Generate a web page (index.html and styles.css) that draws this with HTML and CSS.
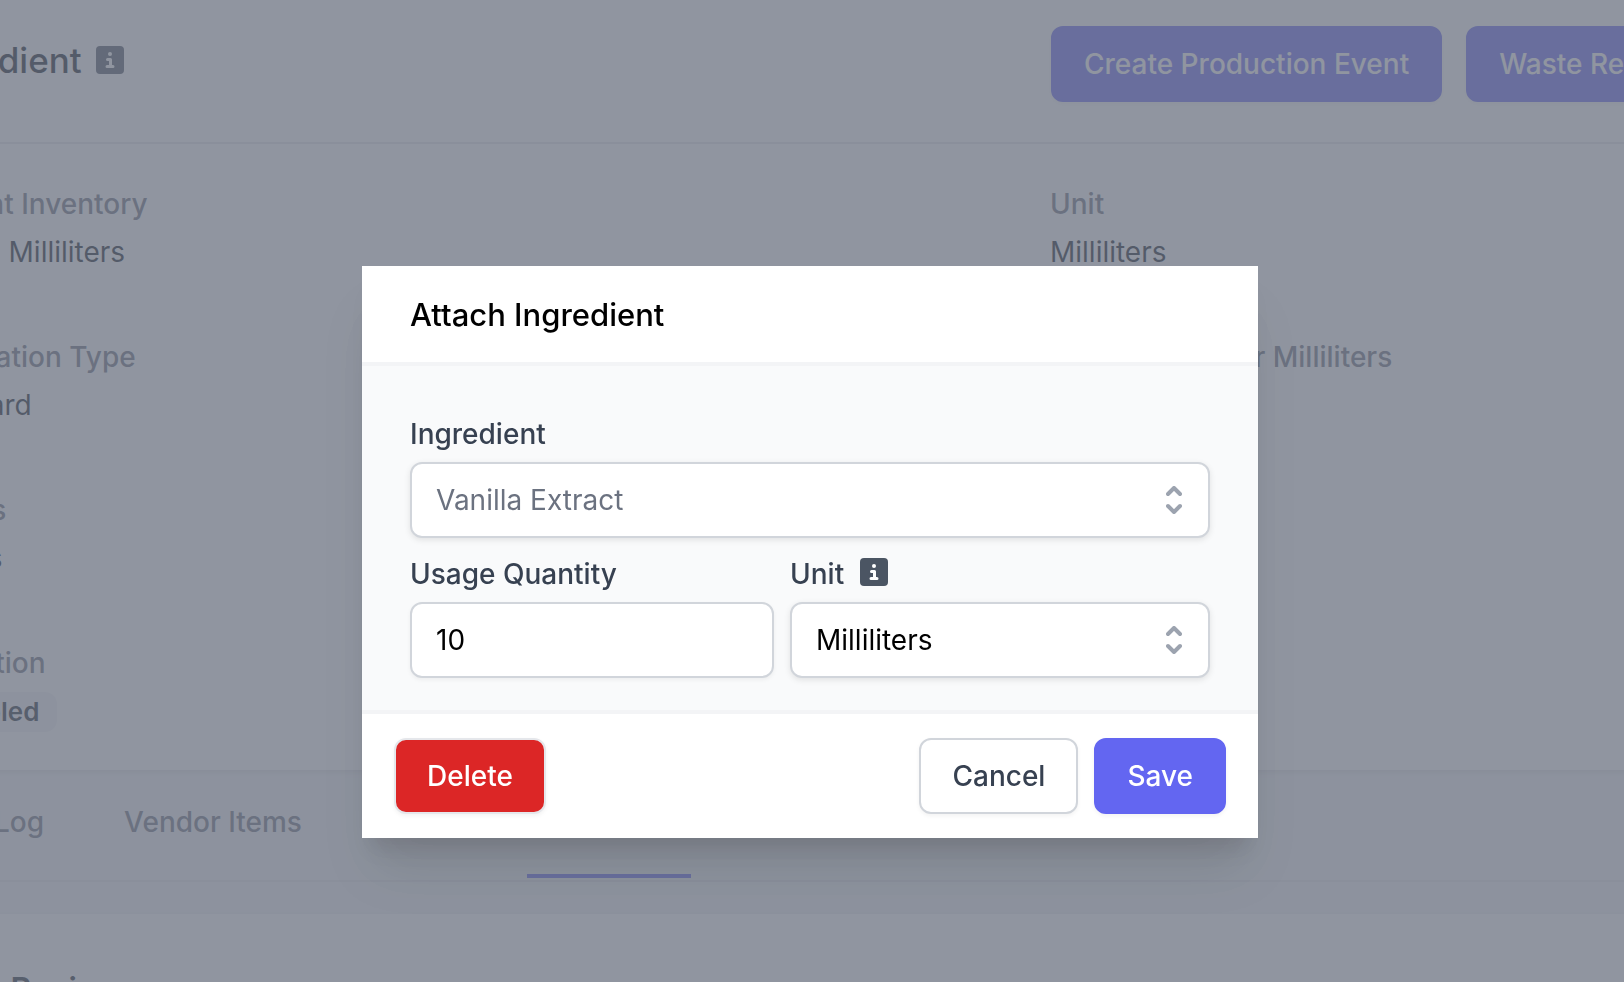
FILE: index.html
```html
<!DOCTYPE html>
<html lang="en">
<head>
  <meta charset="UTF-8" />
  <meta name="viewport" content="width=device-width, initial-scale=1.0" />
  <title>Ingredient</title>
  <link rel="stylesheet" href="styles.css">
</head>
<body>
  <div class="page" inert>
    <section class="card">
      <header class="card-header">
        <h1>Ingredient
          <svg class="info" viewBox="0 0 28 28" aria-hidden="true">
            <rect width="28" height="28" rx="4" fill="currentColor"/>
            <circle cx="14" cy="8" r="2"/>
            <path d="M11.500 13.500h3v7M11 20.500h6"/>
          </svg>
        </h1>
        <div class="actions">
          <button class="btn btn-primary">Create Production Event</button>
          <button class="btn btn-primary">Waste Report</button>
        </div>
      </header>
      <dl class="details">
        <div><dt>Current Inventory</dt><dd>10,000 Milliliters</dd></div>
        <div><dt>Unit</dt><dd>Milliliters</dd></div>
        <div><dt>Calculation Type</dt><dd>Standard</dd></div>
        <div><dt>Market Cost per Milliliters</dt><dd>0.02</dd></div>
        <div><dt>Brands</dt><dd>Bottles</dd></div>
        <div></div>
        <div><dt>Allocation</dt><dd><span class="badge">Disabled</span></dd></div>
      </dl>
    </section>

    <nav class="tabs">
      <a href="#">Log</a>
      <a href="#">Vendor Items</a>
      <a href="#">Sales</a>
      <a href="#" class="active">Allocations</a>
    </nav>

    <section class="card recipe">
      <h2>In Recipes</h2>
    </section>
  </div>

  <div class="overlay">
    <form class="modal" role="dialog" aria-labelledby="modalTitle">
      <h2 class="modal-title" id="modalTitle">Attach Ingredient</h2>

      <div class="modal-body">
        <div class="field">
          <label for="ingredient">Ingredient</label>
          <div class="select">
            <select id="ingredient" class="muted">
              <option>Vanilla Extract</option>
            </select>
            <svg class="chevrons" viewBox="0 0 16 28" aria-hidden="true">
              <path d="M2 8l6-6 6 6M2 20l6 6 6-6"/>
            </svg>
          </div>
        </div>

        <div class="row">
          <div class="field">
            <label for="quantity">Usage Quantity</label>
            <input type="text" id="quantity" value="10" />
          </div>
          <div class="field">
            <label for="unit">Unit
              <svg class="info" viewBox="0 0 28 28" aria-hidden="true">
                <rect width="28" height="28" rx="4" fill="currentColor"/>
                <circle cx="14" cy="8" r="2"/>
                <path d="M11.500 13.500h3v7M11 20.500h6"/>
              </svg>
            </label>
            <div class="select">
              <select id="unit">
                <option>Milliliters</option>
              </select>
              <svg class="chevrons" viewBox="0 0 16 28" aria-hidden="true">
                <path d="M2 8l6-6 6 6M2 20l6 6 6-6"/>
              </svg>
            </div>
          </div>
        </div>
      </div>

      <div class="modal-footer">
        <button type="button" class="btn btn-danger">Delete</button>
        <button type="button" class="btn btn-plain">Cancel</button>
        <button type="submit" class="btn btn-primary">Save</button>
      </div>
    </form>
  </div>
</body>
</html>
```

FILE: styles.css
```css
* { box-sizing: border-box; margin: 0; padding: 0; }

body {
  background: #f3f4f6;
  color: #000;
  font-family: Inter, 'Liberation Sans', sans-serif;
  font-size: 28px;
  line-height: 40px;
  height: 100vh;
  overflow: hidden;
}

button, input, select {
  font: inherit;
}

/* page is scrolled sideways under the dialog */
.page {
  margin-left: -88px;
  margin-right: -400px;
}

.card {
  background: #fff;
  box-shadow: 0 2px 6px rgba(0, 0, 0, 0.1);
}

.card-header {
  display: grid;
  grid-template-columns: 1139px 1fr;
  align-items: center;
  height: 144px;
  padding-bottom: 14px;
  border-bottom: 2px solid #e5e7eb;
}

h1 {
  display: flex;
  align-items: center;
  gap: 14px;
  padding-bottom: 8px;
  font-size: 35px;
  font-weight: 500;
  color: #111827;
}

.info {
  width: 28px;
  height: 28px;
  color: #4b5563;
}

.info circle { fill: #fff; }

.info path {
  fill: none;
  stroke: #fff;
  stroke-width: 3;
  stroke-linecap: round;
  stroke-linejoin: round;
}

.actions {
  display: flex;
  gap: 24px;
}

.btn {
  height: 76px;
  padding: 0 31px;
  border: 2px solid transparent;
  border-radius: 12px;
  font-weight: 500;
  white-space: nowrap;
  cursor: pointer;
  box-shadow: 0 2px 4px rgba(0, 0, 0, 0.05);
}

.btn-primary {
  background: #6366f1;
  border-color: #6366f1;
  color: #fff;
}

.btn-danger {
  background: #dc2626;
  border-color: #e5e7eb;
  color: #fff;
}

.btn-plain {
  background: #fff;
  border-color: #d1d5db;
  color: #374151;
}

.details {
  display: grid;
  grid-template-columns: 1138px 1fr;
  row-gap: 65px;
  padding: 40px 0 38px;
}

dt {
  font-weight: 500;
  color: #6b7280;
}

dd {
  margin-top: 8px;
  color: #111827;
}

.badge {
  display: inline-block;
  padding: 0 18px;
  background: #f3f4f6;
  border-radius: 12px;
  font-size: 26px;
  font-weight: 600;
  color: #1f2937;
}

.tabs {
  display: flex;
  gap: 64px;
  height: 112px;
  padding-left: 74px;
  border-bottom: 2px solid #e5e7eb;
}

.tabs a {
  height: 108px;
  padding: 32px 8px;
  border-bottom: 4px solid transparent;
  color: #6b7280;
  font-weight: 500;
  text-decoration: none;
}

.tabs .active {
  border-color: #6366f1;
  color: #4f46e5;
}

.recipe {
  margin-top: 32px;
  padding: 56px 0 80px 62px;
}

.recipe h2 {
  font-size: 32px;
  font-weight: 600;
  color: #1f2937;
}

.overlay {
  position: fixed;
  inset: 0;
  display: flex;
  justify-content: center;
  align-items: flex-start;
  padding-top: 266px;
  padding-right: 4px;
  background: rgba(107, 114, 128, 0.75);
}

.modal {
  width: 100%;
  max-width: 896px;
  background: #fff;
  box-shadow: 0 40px 50px -10px rgba(0, 0, 0, 0.1), 0 20px 20px -10px rgba(0, 0, 0, 0.1);
}

.modal-title {
  padding: 29px 48px 27px;
  font-size: 31px;
  font-weight: 500;
}

.modal-body {
  display: flex;
  flex-direction: column;
  gap: 16px;
  padding: 48px 48px 32px;
  background: #f9fafb;
  border-top: 4px solid #f3f4f6;
  border-bottom: 4px solid #f3f4f6;
}

.field label {
  display: flex;
  gap: 16px;
  margin-bottom: 8px;
  font-weight: 500;
  color: #374151;
}

.field .info { margin-top: 4px; }

.row {
  display: grid;
  grid-template-columns: 364fr 420fr;
  gap: 16px;
}

.field input, .field select {
  display: block;
  width: 100%;
  height: 76px;
  padding: 0 24px;
  background: #fff;
  border: 2px solid #d1d5db;
  border-radius: 12px;
  color: #000;
  box-shadow: 0 2px 4px rgba(0, 0, 0, 0.05);
}

.field select {
  appearance: none;
  box-shadow: 0 2px 6px rgba(0, 0, 0, 0.1);
}

.field .muted { color: #6b7280; }

.select { position: relative; }

.chevrons {
  position: absolute;
  top: 24px;
  right: 28px;
  width: 16px;
  height: 28px;
  fill: none;
  stroke: #9ca3af;
  stroke-width: 4;
  stroke-linecap: round;
  stroke-linejoin: round;
  pointer-events: none;
}

.modal-footer {
  display: flex;
  gap: 16px;
  padding: 24px 32px;
}

.btn-danger { margin-right: auto; }
```
